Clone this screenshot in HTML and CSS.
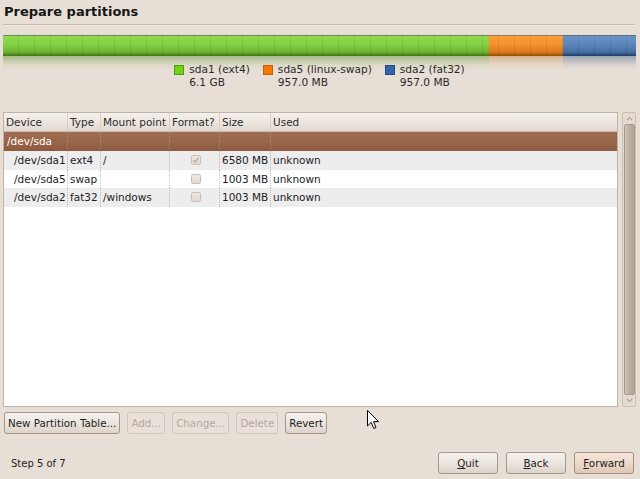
FILE: index.html
```
<!DOCTYPE html>
<html>
<head>
<meta charset="utf-8">
<link rel="stylesheet" href="styles.css">
</head>
<body>
<div class="page">
  <h1 class="title">Prepare partitions</h1>
  <div class="sep"></div>
  <div class="bar">
    <div class="seg seg-green"></div>
    <div class="seg seg-orange"></div>
    <div class="seg seg-blue"></div>
  </div>
  <div class="legend">
    <div class="lg-item"><span class="sw sw-green"></span><div class="lg-text"><div>sda1 (ext4)</div><div>6.1 GB</div></div></div>
    <div class="lg-item"><span class="sw sw-orange"></span><div class="lg-text"><div>sda5 (linux-swap)</div><div>957.0 MB</div></div></div>
    <div class="lg-item"><span class="sw sw-blue"></span><div class="lg-text"><div>sda2 (fat32)</div><div>957.0 MB</div></div></div>
  </div>
  <div class="list-area">
    <div class="tree">
      <div class="row head">
        <div class="c">Device</div><div class="c">Type</div><div class="c">Mount point</div><div class="c">Format?</div><div class="c">Size</div><div class="c">Used</div>
      </div>
      <div class="row disk">
        <div class="c">/dev/sda</div><div class="c"></div><div class="c"></div><div class="c"></div><div class="c"></div><div class="c"></div>
      </div>
      <div class="row odd">
        <div class="c dev">/dev/sda1</div><div class="c">ext4</div><div class="c">/</div><div class="c chk"><span class="cb checked"><svg width="8" height="8" viewBox="0 0 8 8"><path d="M1.5 4.2 L3.3 6 L6.6 1.6" fill="none" stroke="#b8aca0" stroke-width="1.3"/></svg></span></div><div class="c">6580 MB</div><div class="c">unknown</div>
      </div>
      <div class="row even">
        <div class="c dev">/dev/sda5</div><div class="c">swap</div><div class="c"></div><div class="c chk"><span class="cb"></span></div><div class="c">1003 MB</div><div class="c">unknown</div>
      </div>
      <div class="row odd">
        <div class="c dev">/dev/sda2</div><div class="c">fat32</div><div class="c">/windows</div><div class="c chk"><span class="cb"></span></div><div class="c">1003 MB</div><div class="c">unknown</div>
      </div>
    </div>
    <div class="scroll">
      <div class="sb-btn"><svg width="7" height="5" viewBox="0 0 7 5"><path d="M1 4 L3.5 1.5 L6 4" fill="none" stroke="#b0a396" stroke-width="1.2"/></svg></div>
      <div class="thumb"></div>
      <div class="sb-btn"><svg width="7" height="5" viewBox="0 0 7 5"><path d="M1 1 L3.5 3.5 L6 1" fill="none" stroke="#b0a396" stroke-width="1.2"/></svg></div>
    </div>
  </div>
  <div class="actions">
    <button class="btn">New Partition Table...</button>
    <button class="btn" disabled>Add...</button>
    <button class="btn" disabled>Change...</button>
    <button class="btn" disabled>Delete</button>
    <button class="btn">Revert</button>
  </div>
  <div class="footer">
    <span class="step">Step 5 of 7</span>
    <div class="nav">
      <button class="btn wide"><u>Q</u>uit</button>
      <button class="btn wide"><u>B</u>ack</button>
      <button class="btn wide default"><u>F</u>orward</button>
    </div>
  </div>
</div>
<svg class="cursor" width="13" height="20" viewBox="0 0 13 20"><path d="M0.5 0.5 L0.5 16 L4.2 12.4 L6.8 18.5 L9 17.5 L6.5 11.6 L11.5 11.6 Z" fill="#fff" stroke="#000" stroke-width="1" stroke-linejoin="round"/></svg>
</body>
</html>
```
FILE: styles.css
```
html, body {
  margin: 0;
  padding: 0;
}
body {
  width: 640px;
  height: 479px;
  overflow: hidden;
  position: relative;
  background: #e7dfd6;
  font-family: "DejaVu Sans", sans-serif;
  font-size: 10px;
  color: #1c1c1c;
}
.page {
  display: flex;
  flex-direction: column;
  padding: 0 4px 0 3px;
}
.title {
  margin: 0;
  padding: 4px 0 0 1px;
  font-size: 13px;
  line-height: 15px;
  font-weight: bold;
  color: #161616;
}
.sep {
  margin: 5px 1px 0 0;
  height: 1px;
  background: #c9b9aa;
  box-shadow: 0 1px 0 #efe9e3;
}
.bar {
  margin-top: 10px;
  height: 21px;
  display: flex;
  position: relative;
}
.bar::before {
  content: "";
  position: absolute;
  left: 0; right: 0; top: 0; bottom: 0;
  background: repeating-linear-gradient(90deg, transparent 0 15px, rgba(0,0,0,0.07) 15px 16px, rgba(255,255,255,0.06) 16px 17px, transparent 17px 16px);
  background-size: 16px 100%;
  z-index: 2;
  pointer-events: none;
}
.seg {
  position: relative;
  height: 21px;
  box-sizing: border-box;
  border-top: 1px solid rgba(150,150,140,0.55);
}
.seg::after {
  content: "";
  position: absolute;
  left: 0; right: 0;
  top: 100%;
  height: 14px;
}
.seg-green {
  width: 486px;
  background: linear-gradient(#8fdb4c, #84d244 40%, #6db331 80%, #4a8419 95%, #3d7210);
}
.seg-green::after { background: linear-gradient(rgba(90,140,40,0.45), rgba(120,170,70,0.12) 60%, rgba(231,223,214,0)); }
.seg-orange {
  width: 74px;
  background: linear-gradient(#fb9e3c, #f5922d 40%, #db7a1a 80%, #a65a0c 95%, #8e4c08);
}
.seg-orange::after { background: linear-gradient(rgba(190,110,40,0.4), rgba(220,150,90,0.12) 60%, rgba(231,223,214,0)); }
.seg-blue {
  flex: 1;
  background: linear-gradient(#6a92c6, #5d86bb 40%, #47709f 80%, #25497a 95%, #1b3b66);
}
.seg-blue::after { background: linear-gradient(rgba(50,80,120,0.4), rgba(90,110,140,0.12) 60%, rgba(231,223,214,0)); }

.legend {
  margin-top: 7px;
  display: flex;
  justify-content: center;
  gap: 13px;
  line-height: 13px;
  font-size: 10.6px;
  position: relative;
  z-index: 3;
}
.lg-item {
  display: flex;
  align-items: flex-start;
  gap: 5px;
}
.sw {
  width: 10px;
  height: 10px;
  margin-top: 1.5px;
  box-sizing: border-box;
  border: 1px solid;
}
.sw-green { background: #73d216; border-color: #4e9a06; }
.sw-orange { background: #f57900; border-color: #ce5c00; }
.sw-blue { background: #3465a4; border-color: #204a87; }
.lg-text { color: #2a2a2a; }

.list-area {
  margin-top: 23px;
  height: 295px;
  display: flex;
}
.tree {
  width: 615px;
  box-sizing: border-box;
  border: 1px solid #c2b3a5;
  background: #fff;
  font-size: 10.5px;
}
.row {
  display: grid;
  grid-template-columns: 63px 33px 69px 50px 51px 1fr;
  height: 18.5px;
  line-height: 18.5px;
}
.c {
  box-sizing: border-box;
  padding-left: 2px;
  white-space: nowrap;
  overflow: hidden;
  border-left: 1px dotted rgba(0,0,0,0.22);
}
.c:first-child {
  border-left: none;
  padding-left: 3px;
}
.head {
  height: 18px;
  line-height: 18px;
  background: linear-gradient(#f4f0ec, #ede7e1 50%, #e1d8cf);
  border-bottom: 1px solid #c9bbad;
  color: #2b2b2b;
}
.head .c {
  border-left: 1px solid #d9cfc5;
}
.head .c:first-child { border-left: none; padding-left: 2px; }
.disk {
  height: 19px;
  line-height: 19px;
  background: linear-gradient(#a06c51, #9a6649 50%, #8d5a41);
  color: #fff;
}
.disk .c { border-left-color: rgba(255,255,255,0.22); }
.odd { background: #ededed; }
.even { background: #fff; }
.dev { padding-left: 10px !important; }
.chk {
  display: flex;
  align-items: center;
  justify-content: center;
}
.cb {
  width: 10px;
  height: 10px;
  box-sizing: border-box;
  border: 1px solid #cbc0b5;
  border-radius: 2px;
  background: linear-gradient(#efe9e3, #e0d8cf);
  display: flex;
  align-items: center;
  justify-content: center;
}
.scroll {
  margin-left: 4px;
  width: 14px;
  box-sizing: border-box;
  border: 1px solid #cdbfb2;
  border-radius: 2px;
  background: #e4dcd3;
  display: flex;
  flex-direction: column;
}
.sb-btn {
  height: 11px;
  display: flex;
  align-items: center;
  justify-content: center;
}
.thumb {
  flex: 1;
  margin: 0 0.5px;
  box-sizing: border-box;
  border: 1px solid #a99a8b;
  border-radius: 2px;
  background: linear-gradient(90deg, #d0c5b9, #c0b2a4 40%, #b3a494);
}

.btn {
  font-family: "DejaVu Sans", sans-serif;
  font-size: 10.3px;
  color: #1c1c1c;
  height: 22px;
  padding: 0 3px;
  margin: 0;
  border: 1px solid #a5978a;
  border-radius: 3px;
  background: linear-gradient(#f6f2ee, #ece5de 50%, #ddd3c9);
  line-height: 20px;
}
.btn:disabled {
  color: #b3a89d;
  border-color: #d0c6bc;
  background: #e9e1d9;
}
.actions {
  margin: 5px 0 0 1px;
  display: flex;
  gap: 7px;
}
.footer {
  margin-top: 18px;
  display: flex;
  align-items: center;
  justify-content: space-between;
  padding: 0 2px 0 8px;
}
.step { color: #1f1f1f; }
.nav {
  display: flex;
  gap: 8px;
}
.wide { min-width: 60px; }
.default {
  background: linear-gradient(#f6e6db, #eed8ca 50%, #e0c7b7);
  border-color: #a89080;
}
.cursor {
  position: absolute;
  left: 367px;
  top: 410px;
}
```
